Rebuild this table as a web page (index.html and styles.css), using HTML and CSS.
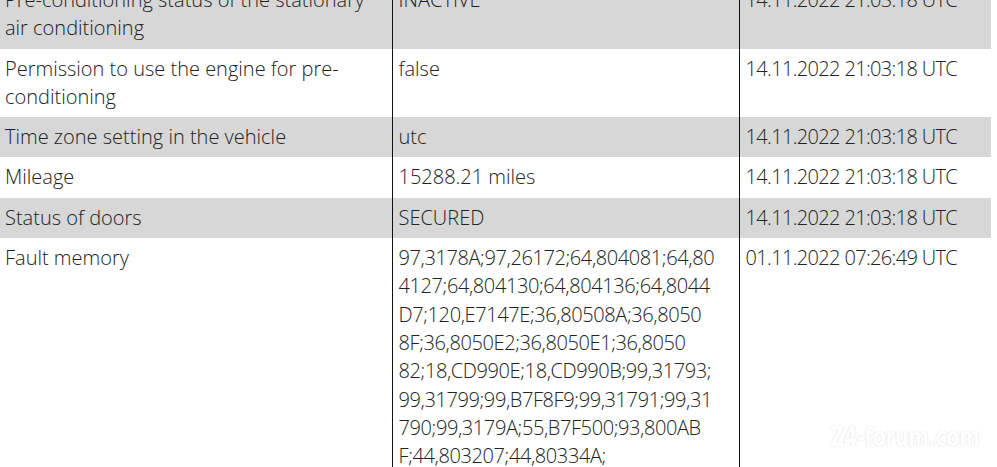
FILE: index.html
```html
<!DOCTYPE html>
<html>
<head>
<meta charset="utf-8">
<link rel="stylesheet" href="styles.css">
</head>
<body>
<div class="page">
<table class="data">
  <colgroup>
    <col class="c1"><col class="c2"><col class="c3">
  </colgroup>
  <tr class="gray">
    <td>Pre-conditioning status of the stationary air conditioning</td>
    <td>INACTIVE</td>
    <td class="num">14.11.2022 21:03:18 UTC</td>
  </tr>
  <tr>
    <td>Permission to use the engine for pre-conditioning</td>
    <td>false</td>
    <td class="num">14.11.2022 21:03:18 UTC</td>
  </tr>
  <tr class="gray">
    <td>Time zone setting in the vehicle</td>
    <td>utc</td>
    <td class="num">14.11.2022 21:03:18 UTC</td>
  </tr>
  <tr>
    <td>Mileage</td>
    <td>15288.21 miles</td>
    <td class="num">14.11.2022 21:03:18 UTC</td>
  </tr>
  <tr class="gray">
    <td>Status of doors</td>
    <td>SECURED</td>
    <td class="num">14.11.2022 21:03:18 UTC</td>
  </tr>
  <tr>
    <td>Fault memory</td>
    <td class="codes">97,3178A;97,26172;64,804081;64,80<br>4127;64,804130;64,804136;64,8044<br>D7;120,E7147E;36,80508A;36,8050<br>8F;36,8050E2;36,8050E1;36,8050<br>82;18,CD990E;18,CD990B;99,31793;<br>99,31799;99,B7F8F9;99,31791;99,31<br>790;99,3179A;55,B7F500;93,800AB<br>F;44,803207;44,80334A;</td>
    <td class="num late">01.11.2022 07:26:49 UTC</td>
  </tr>
</table>
<div class="watermark">Z4-forum.com</div>
</div>
</body>
</html>
```

FILE: styles.css
```css
html, body {
  margin: 0;
  padding: 0;
  background: #ffffff;
  overflow: hidden;
}

.page {
  position: relative;
  height: 467px;
  overflow: hidden;
}

.data {
  margin-top: -20px;
  width: 991px;
  border-collapse: collapse;
  table-layout: fixed;
  font-family: "Open Sans", "Liberation Sans", sans-serif;
  font-weight: 300;
  font-size: 20px;
  line-height: 28.3px;
  color: #222222;
}

.c1 { width: 392px; }
.c2 { width: 347px; }
.c3 { width: 252px; }

.data td {
  vertical-align: top;
  padding: 6px 6px 6px 6px;
  border-left: 1px solid #111111;
  border-right: 1px solid #111111;
}

.data td:first-child {
  border-left: none;
  padding-left: 5px;
}

.data td:last-child {
  border-right: none;
}

.data tr.gray td {
  background: #d7d7d7;
}

.num {
  letter-spacing: -0.65px;
  white-space: nowrap;
}

.late {
  padding-left: 8px;
}

.codes {
  letter-spacing: -0.4px;
  white-space: nowrap;
}

.watermark {
  position: absolute;
  left: 830px;
  top: 422px;
  font-family: "DejaVu Sans Condensed", "DejaVu Sans", sans-serif;
  font-weight: bold;
  font-size: 22px;
  line-height: 26px;
  letter-spacing: -0.6px;
  color: #ffffff;
  text-shadow: 0 0 1px rgba(0, 0, 0, 0.14), 0 0 2px rgba(0, 0, 0, 0.06);
  transform: scale(1.0, 1.2);
  transform-origin: left top;
}
```
